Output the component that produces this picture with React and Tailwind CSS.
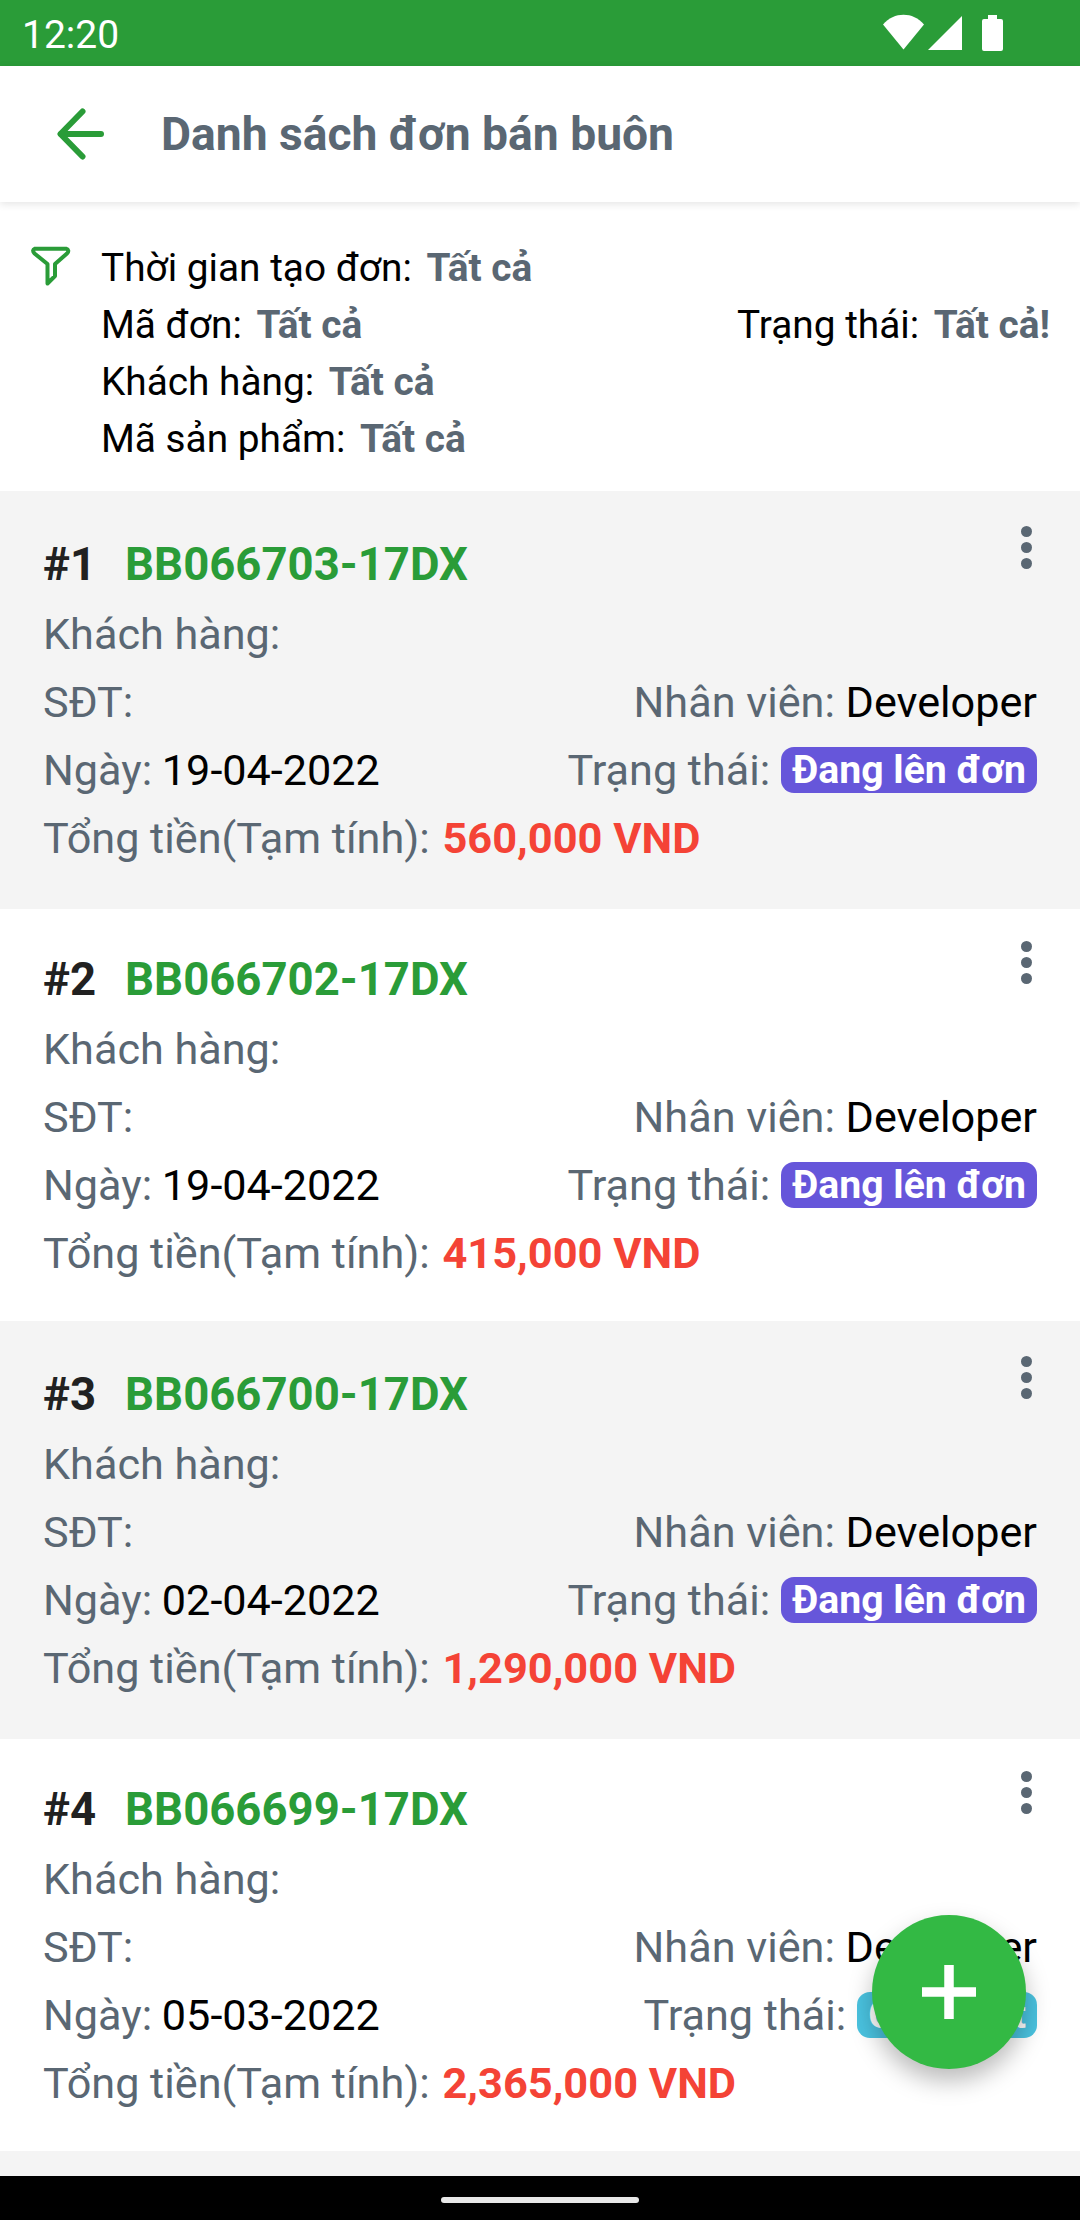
import { useState } from "react";

const orders = [
  { id: 1, code: "BB066703-17DX", date: "19-04-2022", total: "560,000", status: "Đang lên đơn", color: "bg-[#6656da]" },
  { id: 2, code: "BB066702-17DX", date: "19-04-2022", total: "415,000", status: "Đang lên đơn", color: "bg-[#6656da]" },
  { id: 3, code: "BB066700-17DX", date: "02-04-2022", total: "1,290,000", status: "Đang lên đơn", color: "bg-[#6656da]" },
  { id: 4, code: "BB066699-17DX", date: "05-03-2022", total: "2,365,000", status: "Chờ chốt", color: "bg-[#4ac3e0]" },
];

function StatusBar() {
  return (
    <div className="flex h-[66px] shrink-0 items-center justify-between bg-[#2a9c38] pl-[22px] pr-[77px] text-white">
      <span className="pt-[4px] text-[39px] leading-none">12:20</span>
      <svg width="120" height="40" viewBox="0 0 120 40" fill="currentColor">
        <path d="M0 11.500 C11 -1.500 30 -1.500 41 11.500 L20.500 36.500 Z" />
        <path d="M45 37 L79 3 V37 Z" />
        <path d="M105 2 h9 v4 h4 q2 0 2 2 v28 q0 2-2 2 h-17 q-2 0-2-2 v-28 q0-2 2-2 h4 z" />
      </svg>
    </div>
  );
}

function Header() {
  return (
    <header className="z-10 flex h-[136px] shrink-0 items-center bg-white pl-[57px] shadow-[0_2px_8px_rgba(0,0,0,0.11)]">
      <svg width="48" height="52" viewBox="0 0 48 52" fill="none" stroke="#2a9c38" strokeWidth="6" strokeLinecap="round" strokeLinejoin="round">
        <path d="M25.500 3.500 L3.500 26 L25.500 48.500" />
        <path d="M4 26 H44" />
      </svg>
      <h1 className="ml-[56px] text-[46.2px] font-bold leading-none text-[#5a6773]">Danh sách đơn bán buôn</h1>
    </header>
  );
}

function FilterItem({ label, value }) {
  return (
    <p className="whitespace-nowrap">
      {label}: <span className="ml-[5px] font-bold text-[#5a6773]">{value}</span>
    </p>
  );
}

function FilterPanel() {
  return (
    <section className="flex h-[289px] shrink-0 bg-white pl-[31px] pr-[30px] pt-[37px] text-[38.8px] leading-[57px] text-black">
      <svg className="mt-[7px] shrink-0" width="40" height="41" viewBox="0 0 40 41" fill="none" stroke="#2a9c38" strokeWidth="4" strokeLinejoin="round">
        <path d="M4 2.700 H35 Q39 4 36 7.500 L24 18 V30 L16.500 37.500 V18 L3.500 7.500 Q0.500 4 4 2.700 Z" />
      </svg>
      <div className="ml-[30px] flex-1">
        <FilterItem label="Thời gian tạo đơn" value="Tất cả" />
        <div className="flex justify-between">
          <FilterItem label="Mã đơn" value="Tất cả" />
          <FilterItem label="Trạng thái" value="Tất cả!" />
        </div>
        <FilterItem label="Khách hàng" value="Tất cả" />
        <FilterItem label="Mã sản phẩm" value="Tất cả" />
      </div>
    </section>
  );
}

function OrderCard({ order }) {
  return (
    <article className="relative h-[415px] shrink-0 px-[43px] pt-[38px] text-[43.2px] leading-[68px] text-[#5a6773] odd:z-[1] odd:bg-[#f4f4f4] odd:shadow-[0_3px_0_#f4f4f4] even:bg-white">
      <button className="absolute right-[48px] top-[35px] flex flex-col gap-[5px]" aria-label="Menu">
        <span className="size-[11px] rounded-full bg-[#5a6773]" />
        <span className="size-[11px] rounded-full bg-[#5a6773]" />
        <span className="size-[11px] rounded-full bg-[#5a6773]" />
      </button>
      <h2 className="flex gap-[29px] text-[45.5px] font-bold leading-[72px]">
        <span className="text-[#212121]">#{order.id}</span>
        <span className="text-[#2a9c38]">{order.code}</span>
      </h2>
      <p>Khách hàng:</p>
      <div className="flex justify-between">
        <p>SĐT:</p>
        <p>Nhân viên: <span className="text-black">Developer</span></p>
      </div>
      <div className="flex justify-between">
        <p>Ngày: <span className="-ml-px text-black">{order.date}</span></p>
        <div className="flex items-center gap-[11px]">
          <span>Trạng thái:</span>
          <span className={`mb-[2px] h-[46px] rounded-[13px] px-[11px] text-[39.2px] font-bold leading-[46px] text-white ${order.color}`}>
            {order.status}
          </span>
        </div>
      </div>
      <p>Tổng tiền(Tạm tính): <span className="ml-[2px] text-[43.4px] font-bold leading-none text-[#f44336]">{order.total} VND</span></p>
    </article>
  );
}

export default function App() {
  const [list] = useState(orders);

  return (
    <div className="relative flex h-[2220px] w-[1080px] flex-col overflow-hidden bg-[#f4f4f4] font-['Roboto',sans-serif]">
      <StatusBar />
      <Header />
      <FilterPanel />
      <main className="min-h-0 flex-1 overflow-hidden">
        {list.map((order) => (
          <OrderCard key={order.id} order={order} />
        ))}
      </main>

      {/* Add order */}
      <button
        className="absolute bottom-[151px] right-[54px] z-10 flex size-[154px] items-center justify-center rounded-full bg-[#33b944] shadow-[0_12px_24px_rgba(0,0,0,0.27)]"
        aria-label="Thêm đơn"
      >
        <svg width="54" height="54" viewBox="0 0 54 54" stroke="#fff" strokeWidth="9.500">
          <path d="M27 0 V54 M0 27 H54" />
        </svg>
      </button>

      {/* System navigation bar */}
      <div className="flex h-[44px] shrink-0 items-center justify-center bg-black pt-[4px]">
        <div className="h-[6px] w-[198px] rounded-full bg-[#e8e8e8]" />
      </div>
    </div>
  );
}
